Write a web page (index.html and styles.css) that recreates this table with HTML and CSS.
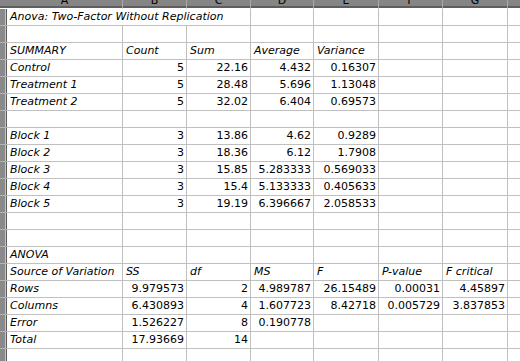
FILE: index.html
```html
<!DOCTYPE html>
<html>
<head>
<meta charset="utf-8">
<link rel="stylesheet" href="styles.css">
</head>
<body>
<div class="sheet">
  <div class="corner"></div>
  <div class="ch"><span>A</span></div><div class="ch"><span>B</span></div><div class="ch"><span>C</span></div><div class="ch"><span>D</span></div><div class="ch"><span>E</span></div><div class="ch"><span>F</span></div><div class="ch"><span>G</span></div><div class="ch"><span>H</span></div>

  <div class="rh"></div><div class="c l title">Anova: Two-Factor Without Replication</div><div class="c"></div><div class="c"></div><div class="c"></div><div class="c"></div><div class="c"></div>

  <div class="rh"></div><div class="c"></div><div class="c"></div><div class="c"></div><div class="c"></div><div class="c"></div><div class="c"></div><div class="c"></div><div class="c"></div>

  <div class="rh"></div><div class="c l">SUMMARY</div><div class="c l">Count</div><div class="c l">Sum</div><div class="c l">Average</div><div class="c l">Variance</div><div class="c"></div><div class="c"></div><div class="c"></div>
  <div class="rh"></div><div class="c l">Control</div><div class="c n">5</div><div class="c n">22.16</div><div class="c n">4.432</div><div class="c n">0.16307</div><div class="c"></div><div class="c"></div><div class="c"></div>
  <div class="rh"></div><div class="c l">Treatment 1</div><div class="c n">5</div><div class="c n">28.48</div><div class="c n">5.696</div><div class="c n">1.13048</div><div class="c"></div><div class="c"></div><div class="c"></div>
  <div class="rh"></div><div class="c l">Treatment 2</div><div class="c n">5</div><div class="c n">32.02</div><div class="c n">6.404</div><div class="c n">0.69573</div><div class="c"></div><div class="c"></div><div class="c"></div>

  <div class="rh"></div><div class="c"></div><div class="c"></div><div class="c"></div><div class="c"></div><div class="c"></div><div class="c"></div><div class="c"></div><div class="c"></div>

  <div class="rh"></div><div class="c l">Block 1</div><div class="c n">3</div><div class="c n">13.86</div><div class="c n">4.62</div><div class="c n">0.9289</div><div class="c"></div><div class="c"></div><div class="c"></div>
  <div class="rh"></div><div class="c l">Block 2</div><div class="c n">3</div><div class="c n">18.36</div><div class="c n">6.12</div><div class="c n">1.7908</div><div class="c"></div><div class="c"></div><div class="c"></div>
  <div class="rh"></div><div class="c l">Block 3</div><div class="c n">3</div><div class="c n">15.85</div><div class="c n">5.283333</div><div class="c n">0.569033</div><div class="c"></div><div class="c"></div><div class="c"></div>
  <div class="rh"></div><div class="c l">Block 4</div><div class="c n">3</div><div class="c n">15.4</div><div class="c n">5.133333</div><div class="c n">0.405633</div><div class="c"></div><div class="c"></div><div class="c"></div>
  <div class="rh"></div><div class="c l">Block 5</div><div class="c n">3</div><div class="c n">19.19</div><div class="c n">6.396667</div><div class="c n">2.058533</div><div class="c"></div><div class="c"></div><div class="c"></div>

  <div class="rh"></div><div class="c"></div><div class="c"></div><div class="c"></div><div class="c"></div><div class="c"></div><div class="c"></div><div class="c"></div><div class="c"></div>
  <div class="rh"></div><div class="c"></div><div class="c"></div><div class="c"></div><div class="c"></div><div class="c"></div><div class="c"></div><div class="c"></div><div class="c"></div>

  <div class="rh"></div><div class="c l">ANOVA</div><div class="c"></div><div class="c"></div><div class="c"></div><div class="c"></div><div class="c"></div><div class="c"></div><div class="c"></div>
  <div class="rh"></div><div class="c l">Source of Variation</div><div class="c l">SS</div><div class="c l">df</div><div class="c l">MS</div><div class="c l">F</div><div class="c l">P-value</div><div class="c l">F critical</div><div class="c"></div>
  <div class="rh"></div><div class="c l">Rows</div><div class="c n">9.979573</div><div class="c n">2</div><div class="c n">4.989787</div><div class="c n">26.15489</div><div class="c n">0.00031</div><div class="c n">4.45897</div><div class="c"></div>
  <div class="rh"></div><div class="c l">Columns</div><div class="c n">6.430893</div><div class="c n">4</div><div class="c n">1.607723</div><div class="c n">8.42718</div><div class="c n">0.005729</div><div class="c n">3.837853</div><div class="c"></div>
  <div class="rh"></div><div class="c l">Error</div><div class="c n">1.526227</div><div class="c n">8</div><div class="c n">0.190778</div><div class="c"></div><div class="c"></div><div class="c"></div><div class="c"></div>
  <div class="rh"></div><div class="c l">Total</div><div class="c n">17.93669</div><div class="c n">14</div><div class="c"></div><div class="c"></div><div class="c"></div><div class="c"></div><div class="c"></div>

  <div class="rh"></div><div class="c"></div><div class="c"></div><div class="c"></div><div class="c"></div><div class="c"></div><div class="c"></div><div class="c"></div><div class="c"></div>
</div>
</body>
</html>
```
FILE: styles.css
```css
html, body {
  margin: 0;
  padding: 0;
  background: #ffffff;
  overflow: hidden;
}

.sheet {
  display: grid;
  grid-template-columns: 7px 116px 64px 64px 63px 65px 64px 65px 40px;
  grid-template-rows: 9px;
  grid-auto-rows: 17px;
  width: 560px;
  font-family: "DejaVu Sans", "Liberation Sans", sans-serif;
  font-size: 11px;
  color: #000000;
}

.corner {
  background: #858585;
  border-bottom: 1px solid #ffffff;
  box-shadow: inset 0 -2px 0 #5e5e5e;
}

.ch {
  background: #858585;
  border-right: 1px solid #a8a8a8;
  border-bottom: 1px solid #ffffff;
  box-shadow: inset 0 -2px 0 #5e5e5e;
  overflow: hidden;
  text-align: center;
  box-sizing: border-box;
}

.ch span {
  display: block;
  line-height: 12px;
  margin-top: -5px;
}

.rh {
  background: linear-gradient(to right, #8a8a8a 0, #8a8a8a 5px, #c6c6c6 5px, #c6c6c6 6px, #5c5c5c 6px);
  border-bottom: 1px solid #b4b4b4;
  box-sizing: border-box;
}

.c {
  border-right: 1px solid #c0c0c0;
  border-bottom: 1px solid #c0c0c0;
  box-sizing: border-box;
  line-height: 16px;
  padding: 0 2px 0 3px;
  white-space: nowrap;
  overflow: hidden;
}

.l {
  font-style: italic;
  text-align: left;
}

.n {
  text-align: right;
}

.title {
  grid-column: span 3;
  overflow: visible;
}
```
